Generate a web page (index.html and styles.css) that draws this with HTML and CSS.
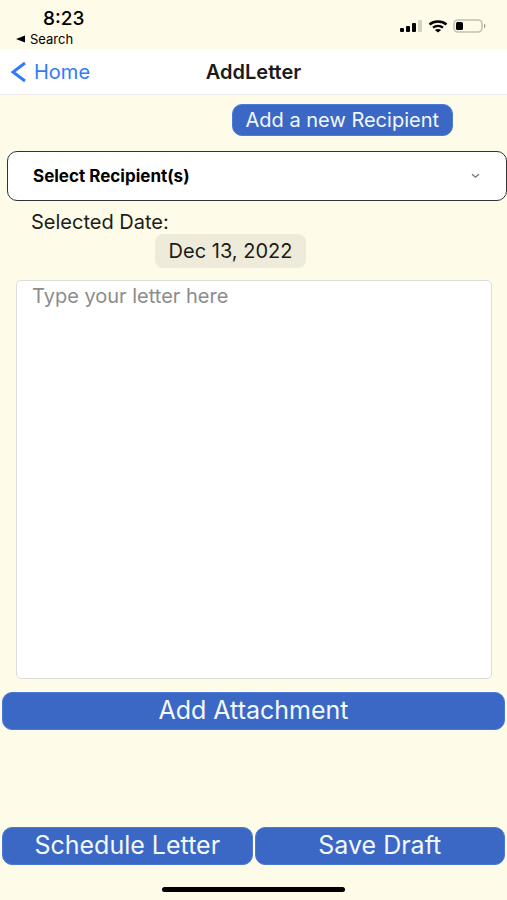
FILE: index.html
```
<!DOCTYPE html>
<html lang="en">

<head>
    <meta charset="UTF-8">
    <meta name="viewport" content="width=device-width, initial-scale=1.0">
    <title>AddLetter</title>
    <link rel="stylesheet" href="styles.css">
</head>

<body>
    <!-- Status bar -->
    <div class="status-bar">
        <div class="status-left">
            <span class="time">8:23</span>
            <a href="#" class="back-app">
                <svg width="9" height="8" viewBox="0 0 9 8"><path d="M0 4 9 0.5v7z" /></svg>
                Search
            </a>
        </div>
        <div class="status-icons">
            <svg width="24" height="12" viewBox="0 0 24 12">
                <rect x="1" y="8" width="4" height="4" rx="1" />
                <rect x="7" y="6" width="4" height="6" rx="1" />
                <rect x="13" y="3" width="4" height="9" rx="1" />
                <rect x="19" y="0" width="4" height="12" rx="1" fill="#d3d1c3" />
            </svg>
            <svg width="20" height="13" viewBox="0 0 20 13">
                <path d="M1.5 4.5C6.2 0.5 13.8 0.5 18.5 4.5M5 7.6C7.8 5.2 12.2 5.2 15 7.6" fill="none" stroke="#000" stroke-width="2.3" />
                <path d="M10 12.4 6.9 9.9C8.6 8.6 11.4 8.6 13.1 9.9z" />
            </svg>
            <svg width="34" height="14" viewBox="0 0 34 14">
                <rect x="1" y="1" width="28" height="12" rx="4" fill="none" stroke="#c3c1b4" stroke-width="1.6" />
                <rect x="3" y="3" width="7" height="8" rx="1.5" />
                <path d="M31 5c2 .6 2 3.4 0 4z" fill="#a3a197" />
            </svg>
        </div>
    </div>

    <!-- Navigation -->
    <header class="nav">
        <a href="#" class="nav-back">
            <svg width="16" height="22" viewBox="0 0 16 22"><path d="M14 2 2 11l12 9" /></svg>
            Home
        </a>
        <h1>AddLetter</h1>
    </header>

    <form class="letter-form">
        <button type="button" class="btn btn-small">Add a new Recipient</button>

        <div class="select-wrap">
            <select id="recipients" aria-label="Recipients">
                <option>Select Recipient(s)</option>
            </select>
            <svg class="chevron" width="9" height="6" viewBox="0 0 9 6"><path d="M1 1.2 4.5 4.2 8 1.2" /></svg>
        </div>

        <label for="date" class="date-label">Selected Date:</label>
        <button type="button" id="date" class="date-btn">Dec 13, 2022</button>

        <textarea id="letter" aria-label="Letter" placeholder="Type your letter here"></textarea>

        <button type="button" class="btn">Add Attachment</button>

        <!-- Actions -->
        <div class="actions">
            <button type="submit" class="btn">Schedule Letter</button>
            <button type="button" class="btn">Save Draft</button>
        </div>
    </form>

    <div class="home-indicator"></div>
</body>

</html>
```
FILE: styles.css
```
* {
    box-sizing: border-box;
}

body {
    display: flex;
    flex-direction: column;
    min-height: 100vh;
    margin: 0;
    background-color: #fffbe9;
    color: #1c1b17;
    font-family: Inter, Roboto, sans-serif;
}

a {
    color: inherit;
    text-decoration: none;
}

button,
select,
textarea {
    margin: 0;
    font-family: inherit;
}

.status-bar {
    display: flex;
    justify-content: space-between;
    height: 49px;
    padding: 8px 20px 0 16px;
    color: #000;
}

.status-left {
    display: flex;
    flex-direction: column;
}

.time {
    padding-left: 27px;
    font-size: 19px;
    font-weight: 500;
    line-height: 22px;
}

.back-app {
    display: flex;
    align-items: center;
    gap: 5px;
    font-size: 13px;
    line-height: 18px;
}

.status-icons {
    display: flex;
    align-items: center;
    gap: 5px;
    height: 36px;
}

.nav {
    display: grid;
    grid-template-columns: 1fr auto 1fr;
    align-items: center;
    height: 46px;
    padding: 0 11px;
    background-color: #fff;
    border-bottom: 1px solid #ebe9e4;
}

.nav-back {
    display: flex;
    align-items: center;
    gap: 7px;
    color: #2f7cf6;
    font-size: 20px;
}

.nav-back path {
    fill: none;
    stroke: #2f7cf6;
    stroke-width: 3;
}

.nav h1 {
    margin: 0;
    font-size: 20px;
    font-weight: 600;
}

.letter-form {
    display: flex;
    flex: 1;
    flex-direction: column;
    padding: 9px 2px 0;
}

.btn {
    height: 38px;
    padding: 0 0 2px;
    background-color: #3b68c4;
    border: 1px solid #4a7ad6;
    border-radius: 10px;
    color: #f4f8ff;
    font-size: 25px;
    line-height: 32px;
    cursor: pointer;
}

.btn-small {
    align-self: flex-end;
    height: 32px;
    margin-right: 52px;
    padding: 0 13px;
    font-size: 20px;
    line-height: 28px;
}

.select-wrap {
    position: relative;
    margin: 15px -2px 0 5px;
}

select {
    display: block;
    width: 100%;
    height: 50px;
    padding: 0 25px;
    appearance: none;
    background-color: #fff;
    border: 1px solid #333;
    border-radius: 10px;
    color: #000;
    font-size: 17px;
    font-weight: 700;
}

.chevron {
    position: absolute;
    top: 22px;
    right: 27px;
    pointer-events: none;
}

.chevron path {
    fill: none;
    stroke: #777;
    stroke-width: 1.4;
}

.date-label {
    margin: 9px 0 0 29px;
    font-size: 20px;
    line-height: 24px;
}

.date-btn {
    align-self: center;
    height: 34px;
    margin-right: 46px;
    padding: 0 14px;
    background-color: #eeebdb;
    border: none;
    border-radius: 8px;
    color: #1c1b17;
    font-size: 20px;
}

textarea {
    flex: 1;
    margin: 12px 13px 13px 14px;
    padding: 3px 15px;
    background-color: #fff;
    border: 1px solid #dddcd8;
    border-radius: 5px;
    color: #1c1b17;
    font-size: 20px;
    line-height: 24px;
    resize: none;
}

textarea::placeholder {
    color: #8c8c8c;
}

.actions {
    display: grid;
    grid-template-columns: 1fr 1fr;
    gap: 2px;
    margin-top: 97px;
}

.home-indicator {
    align-self: center;
    width: 36%;
    height: 5px;
    margin: 22px 0 8px;
    background-color: #000;
    border-radius: 3px;
}
```
